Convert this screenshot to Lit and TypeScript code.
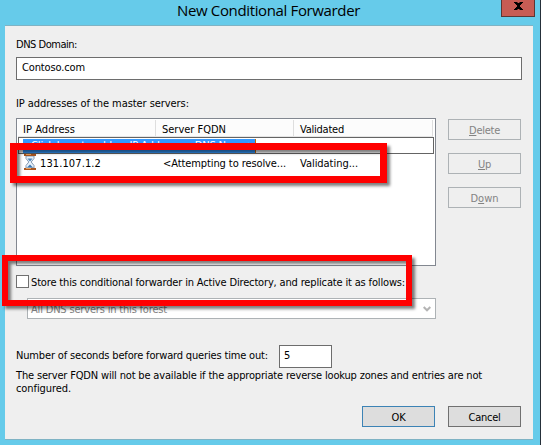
import { LitElement, html, css, svg } from "lit";
import { customElement, property } from "lit/decorators.js";

/* Single-line label whose tracking is computed so that it fills a given width. */
@customElement("fit-text")
class FitText extends LitElement {
  @property({ type: Number }) w = 0;

  static styles = css`
    :host { display: inline-block; white-space: pre; flex: none; }
    u { text-underline-offset: 1px; text-decoration-thickness: 1px; }
  `;

  firstUpdated() {
    const count = (this.textContent || "").length;
    const natural = this.getBoundingClientRect().width;
    if (this.w && count) {
      this.style.letterSpacing = `${(this.w - natural) / count}px`;
    }
  }

  render() {
    return html`<slot></slot>`;
  }
}

const hourglass = svg`
  <path d="M2 2h8v2.500L7.200 8 10 11.500V14H2v-2.500L4.800 8 2 4.500z" fill="#e6f1fa" stroke="#8299b3" stroke-width="1"/>
  <path d="M3.500 4.500h5L6.300 7.200h-.6z" fill="#4f86b8"/>
  <path d="M3 13.500l3-3 3 3z" fill="#3f78b0"/>
  <rect x="0" y="0" width="12" height="2" fill="#a9561f"/>
  <rect x="2" y="0" width="5" height="1" fill="#eda45f"/>
  <rect x="0" y="14" width="12" height="2" fill="#a9561f"/>
  <rect x="2" y="14" width="5" height="1" fill="#eda45f"/>`;

@customElement("app-root")
class AppRoot extends LitElement {
  static styles = css`
    :host {
      display: block; width: 545px; height: 445px; overflow: hidden; position: relative;
      background: #fff; color: #000;
      font: 11px/13px "DejaVu Sans Condensed", "DejaVu Sans", sans-serif;
      font-stretch: condensed;
    }
    * { box-sizing: border-box; }
    .window { width: 541px; height: 445px; background: #66cbea; border-right: 1px solid #25303a; padding-left: 5px; }
    .titlebar { display: flex; height: 25px; }
    .title { width: 496px; padding-left: 172px; font: 15px/20px "Open Sans", "Noto Sans", sans-serif; font-stretch: normal; }
    .close { width: 34px; height: 17px; background: #c75c54; border: 1px solid #5c3634; border-top: 0; display: flex; justify-content: center; }
    .close svg { margin-top: 2px; margin-left: 1px; }
    .panel { width: 528px; height: 415px; background: #efefef; border-top: 1px solid #7fb3c4; border-bottom: 1px solid #7fb3c4; padding: 12px 0 0 11px; display: flex; flex-direction: column; align-items: flex-start; }
    .field { height: 23px; background: #fff; border: 1px solid #6d6d6d; padding: 3px 4px; }
    .domain { width: 506px; margin: 6px 0 17px; padding-left: 5px; }
    .servers { display: flex; gap: 12px; margin-top: 8px; }
    .list { width: 420px; height: 148px; background: #fff; border: 1px solid #828790; padding: 1px; }
    .header { display: flex; height: 17px; width: 415px; background: #fcfcfc; border-bottom: 1px solid #e5e5e5; }
    .header div { border-right: 1px solid #dedede; padding: 3px 0 0 6px; height: 16px; }
    .header div:nth-child(1) { width: 138px; padding-left: 5px; }
    .header div:nth-child(2) { width: 138px; }
    .header div:nth-child(3) { width: 139px; }
    .edit { width: 416px; height: 17px; border: 1px solid #646464; padding: 1px 0 0 4px; }
    .selection { width: 233px; height: 14px; background: #3399ff; color: #fff; border-right: 1px solid #cc6600; }
    .row { display: grid; grid-template-columns: 22px 123px 137px 1fr; justify-items: start; height: 17px; }
    .row svg { margin-left: 6px; }
    .row fit-text { margin-top: 3px; }
    .side { display: flex; flex-direction: column; gap: 13px; padding-top: 1px; }
    .btn { width: 73px; height: 21px; text-align: center; padding-top: 4px; border: 1px solid #adb2b5; color: #838383; }
    .btn.on { background: #ddd; border-color: #707070; color: #000; }
    .btn.default { border-color: #3c83b5; }
    .check { display: flex; height: 13px; margin-top: 9px; }
    .box { width: 13px; height: 13px; background: #fff; border: 1px solid #707070; margin-right: 2px; }
    .check fit-text { margin-top: 1px; }
    .select { width: 409px; height: 21px; margin: 10px 0 0 11px; background: #fff; border: 1px solid #adb2b5; color: #838383; padding: 4px 4px 0 3px; display: flex; justify-content: space-between; }
    .select svg { margin-top: 3px; }
    .timeout { display: flex; margin-top: 26px; }
    .timeout-label { padding-top: 4px; width: 263px; }
    .seconds { width: 53px; }
    .note { margin-top: 1px; height: 26px; display: flex; flex-direction: column; align-items: flex-start; }
    .actions { display: flex; gap: 13px; margin: 11px 0 0 346px; }
    .mark { position: absolute; border: solid #ff0000; filter: drop-shadow(3px 3px 1.5px rgba(0, 0, 0, 0.5)); }
    .mark-row { left: 10px; top: 143px; width: 377px; height: 40px; border-width: 7px; }
    .mark-store { left: 2px; top: 255px; width: 410px; height: 51px; border-width: 6px; }
  `;

  render() {
    return html`
      <div class="window">
        <div class="titlebar">
          <div class="title"><fit-text w="183">New Conditional Forwarder</fit-text></div>
          <div class="close">
            <svg width="9" height="8" viewBox="0 0 9 8"><path d="M0 0h3.500v1h2V0H9v1H8v1H7v1H6v2h1v1h1v1h1v1H5.500V7h-2v1H0V7h1V6h1V5h1V3H2V2H1V1H0z" fill="#000"/></svg>
          </div>
        </div>
        <div class="panel">
          <fit-text w="61">DNS Domain:</fit-text>
          <div class="field domain"><fit-text w="63">Contoso.com</fit-text></div>
          <fit-text w="173">IP addresses of the master servers:</fit-text>
          <div class="servers">
            <div class="list">
              <div class="header">
                <div><fit-text w="52">IP Address</fit-text></div>
                <div><fit-text w="64">Server FQDN</fit-text></div>
                <div><fit-text w="44">Validated</fit-text></div>
              </div>
              <div class="edit"><div class="selection"><fit-text w="232">&lt;Click here to add an IP Address or DNS Name&gt;</fit-text></div></div>
              <div class="row">
                <svg width="12" height="16" viewBox="0 0 12 16">${hourglass}</svg>
                <fit-text w="61">131.107.1.2</fit-text>
                <fit-text w="123">&lt;Attempting to resolve...</fit-text>
                <fit-text w="58">Validating...</fit-text>
              </div>
            </div>
            <div class="side">
              <div class="btn"><fit-text w="31"><u>D</u>elete</fit-text></div>
              <div class="btn"><fit-text w="13"><u>U</u>p</fit-text></div>
              <div class="btn"><fit-text w="28">D<u>o</u>wn</fit-text></div>
            </div>
          </div>
          <div class="check"><div class="box"></div><fit-text w="374">Store this conditional forwarder in Active Directory, and replicate it as follows:</fit-text></div>
          <div class="select">
            <fit-text w="136">All DNS servers in this forest</fit-text>
            <svg width="8" height="6" viewBox="0 0 8 6"><path d="M.7 1L4 4.300 7.300 1" fill="none" stroke="#b4b4b4" stroke-width="2"/></svg>
          </div>
          <div class="timeout">
            <div class="timeout-label"><fit-text w="252">Number of seconds before forward queries time out:</fit-text></div>
            <div class="field seconds"><fit-text>5</fit-text></div>
          </div>
          <div class="note">
            <fit-text w="466">The server FQDN will not be available if the appropriate reverse lookup zones and entries are not</fit-text>
            <fit-text w="55">configured.</fit-text>
          </div>
          <div class="actions">
            <div class="btn on default"><fit-text w="14">OK</fit-text></div>
            <div class="btn on"><fit-text w="32">Cancel</fit-text></div>
          </div>
        </div>
      </div>
      <div class="mark mark-row"></div>
      <div class="mark mark-store"></div>
    `;
  }
}
